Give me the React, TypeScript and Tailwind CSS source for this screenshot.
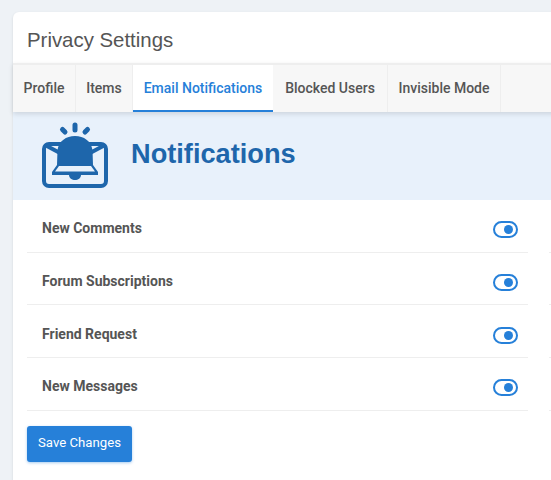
const tabs = [
  { label: "Profile", w: "w-[63px]" },
  { label: "Items", w: "w-[57px]" },
  { label: "Email Notifications", w: "w-[140px]", active: true },
  { label: "Blocked Users", w: "w-[115px]" },
  { label: "Invisible Mode", w: "w-[113px]" },
];

const rows = ["New Comments", "Forum Subscriptions", "Friend Request", "New Messages"];

const BellMail = () => (
  <svg width="68" height="67" viewBox="0 0 68 67" fill="none">
    <rect x="3" y="22" width="62" height="42" rx="5" stroke="#1e66ab" strokeWidth="4" />
    <path d="M4 23l15 8M64 23l-15 8" stroke="#1e66ab" strokeWidth="4" />
    <path
      d="M16.5 28C18 19 25 14 34 14S50 19 51.5 28L52 43L57 50V53H11V50L16 43z"
      fill="#1e66ab"
    />
    <path d="M18 44H50L54 49.5H14z" fill="#e8f1fb" />
    <path d="M28 53H40C40 56 37 58 34 58S28 56 28 53z" fill="#1e66ab" />
    <path d="M34 3V8M21.5 7.5L24 10M46.5 7.5L44 10" stroke="#1e66ab" strokeWidth="5" strokeLinecap="round" />
  </svg>
);

const Toggle = () => (
  <span className="mt-[3px] flex h-[17px] w-[25px] items-center justify-end rounded-full border-2 border-[#2680d9] pr-[3px]">
    <span className="h-[9px] w-[9px] rounded-full bg-[#2680d9]" />
  </span>
);

export default function App() {
  return (
    <div className="h-[480px] overflow-hidden bg-[#eef2f6] pl-[13px] pt-3 font-['Roboto',sans-serif]">
      <div className="h-[480px] w-[560px] rounded-tl-md bg-white shadow-sm">
        <h1 className="flex h-[51px] items-center pl-[14px] pt-[6px] font-['Liberation_Sans',sans-serif] text-[20.4px] text-[#555]">
          Privacy Settings
        </h1>
        <nav className="relative z-10 flex h-[49px] border-t-2 border-[#eeeeee] bg-[#f7f7f7] shadow-[0_2px_5px_rgba(0,0,0,0.12)]">
          {tabs.map((t) => (
            <a
              key={t.label}
              className={`flex items-center justify-center text-sm font-medium ${t.w} ${
                t.active
                  ? "border-b-2 border-[#2680d9] bg-white text-[#2680d9]"
                  : "border-r border-[#eeeeee] pb-[1px] text-[#555]"
              }`}
            >
              {t.label}
            </a>
          ))}
        </nav>
        <div className="flex h-[88px] items-center gap-[22px] bg-[#e8f1fb] pb-[1px] pl-[28px]">
          <BellMail />
          <h2 className="pb-[3px] font-['Liberation_Sans',sans-serif] text-[27.2px] font-bold text-[#1e66ab]">
            Notifications
          </h2>
        </div>
        <div className="ml-[14px] flex gap-[21px]">
          <div className="w-[501px]">
            {rows.map((r) => (
              <div
                key={r}
                className="flex h-[52.7px] items-center justify-between border-b border-[#eeeeee] pl-[15px] pr-[10px] pt-[5px]"
              >
                <span className="text-sm font-bold text-[#555]">{r}</span>
                <Toggle />
              </div>
            ))}
            <button className="mt-[15px] h-9 w-[105px] rounded-[3px] bg-[#2680d9] pb-[2px] text-[13.2px] text-white shadow-[0_1px_3px_rgba(38,128,217,0.4)]">
              Save Changes
            </button>
          </div>
          <div className="w-[24px]">
            {rows.map((r) => (
              <div key={r} className="h-[52.7px] border-b border-[#eeeeee]" />
            ))}
          </div>
        </div>
      </div>
    </div>
  );
}
